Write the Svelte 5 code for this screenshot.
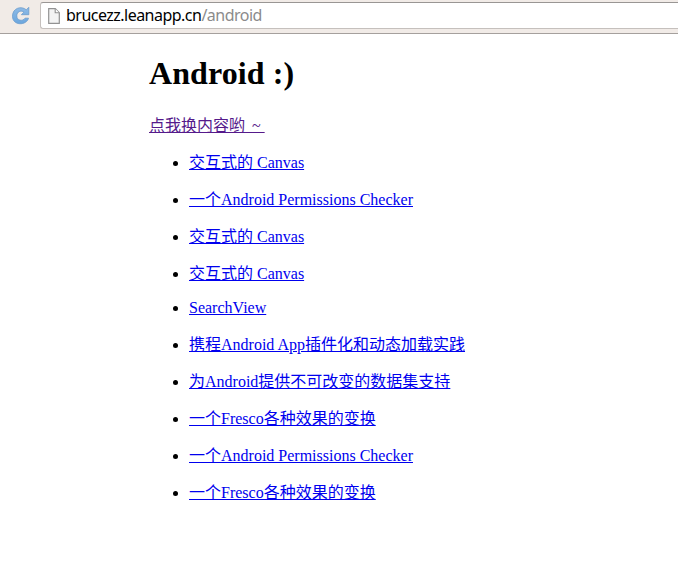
<script>
  const links = [
    '交互式的 Canvas',
    '一个Android Permissions Checker',
    '交互式的 Canvas',
    '交互式的 Canvas',
    'SearchView',
    '携程Android App插件化和动态加载实践',
    '为Android提供不可改变的数据集支持',
    '一个Fresco各种效果的变换',
    '一个Android Permissions Checker',
    '一个Fresco各种效果的变换'
  ];
  const hasHan = (text) => /[\u4e00-\u9fff]/.test(text);
</script>

<header class="toolbar">
  <svg class="reload" width="20" height="20" viewBox="0 0 20 20" aria-label="Reload">
    <defs>
      <linearGradient id="blue" x1="0" y1="0" x2="0" y2="1">
        <stop offset="0" stop-color="#8fbbe6" />
        <stop offset="1" stop-color="#6ba6de" />
      </linearGradient>
    </defs>
    <path
      d="M17.8 1.3V8.7H10.4L12.9 6.2C10 3.8 5.8 5.6 5.8 9.9C5.8 14.6 11.5 15.7 14 12.2H17.5C15.5 19.8 1.5 20 1.5 10.2C1.5 1.8 10.6-.4 15.3 3.8Z"
      fill="url(#blue)" stroke="#6c9ccc" stroke-width=".8" stroke-linejoin="round" />
  </svg>
  <div class="address">
    <svg width="12" height="16" viewBox="0 0 12 16" aria-hidden="true">
      <path d="M.7.7H7.3L11.3 4.7V15.3H.7Z" fill="#f4f4f4" stroke="#929292" stroke-width="1.2" />
      <path d="M7.2.8V4.8H11.2" fill="#fff" stroke="#929292" stroke-width="1.1" />
    </svg>
    <span class="url"><span class="host">brucezz.leanapp.cn</span><span class="path">/android</span></span>
  </div>
</header>

<main>
  <h1>Android :)</h1>
  <a class="visited" href="#top">点我换内容哟<span class="gap">&nbsp;</span>~&nbsp;</a>
  <ul>
    {#each links as text}
      <li class:han={hasHan(text)}><a href="#item">{text}</a></li>
    {/each}
  </ul>
</main>

<style>
  :global(body) {
    background: #fff;
    overflow: hidden;
  }
  .toolbar {
    box-sizing: border-box;
    height: 34px;
    display: flex;
    align-items: flex-start;
    padding: 2px 0 0 11px;
    gap: 9px;
    background: #f1ebe7;
    border-bottom: 1px solid #a5a09d;
  }
  .reload {
    flex: none;
    margin-top: 4px;
  }
  .address {
    box-sizing: border-box;
    flex: 1;
    height: 27px;
    display: flex;
    align-items: center;
    padding-left: 7px;
    gap: 6px;
    background: #fff;
    border: 1px solid #c5c0bd;
    border-top-color: #999694;
    border-right: 0;
    border-radius: 3px 0 0 3px;
  }
  .url {
    font: 16px/24px "Noto Sans", sans-serif;
    letter-spacing: -0.52px;
    white-space: nowrap;
    padding-bottom: 1px;
  }
  .host {
    color: #000;
  }
  .path {
    color: #8b8b8b;
  }
  main {
    padding: 21px 0 0 149px;
    font: 16px/18px "Liberation Serif", "Noto Sans CJK SC", serif;
    color: #000;
  }
  h1 {
    margin: 0 0 26px;
    font-size: 32px;
    line-height: 36px;
    letter-spacing: 0.1px;
  }
  a {
    color: #00e;
    text-decoration: underline;
  }
  .visited {
    display: block;
    width: max-content;
    color: #551a8b;
  }
  .gap {
    letter-spacing: 3px;
  }
  ul {
    margin: 16px 0 0;
    padding-left: 40px;
  }
  li {
    margin-bottom: 16px;
  }
  .han {
    padding-top: 3px;
  }
</style>
